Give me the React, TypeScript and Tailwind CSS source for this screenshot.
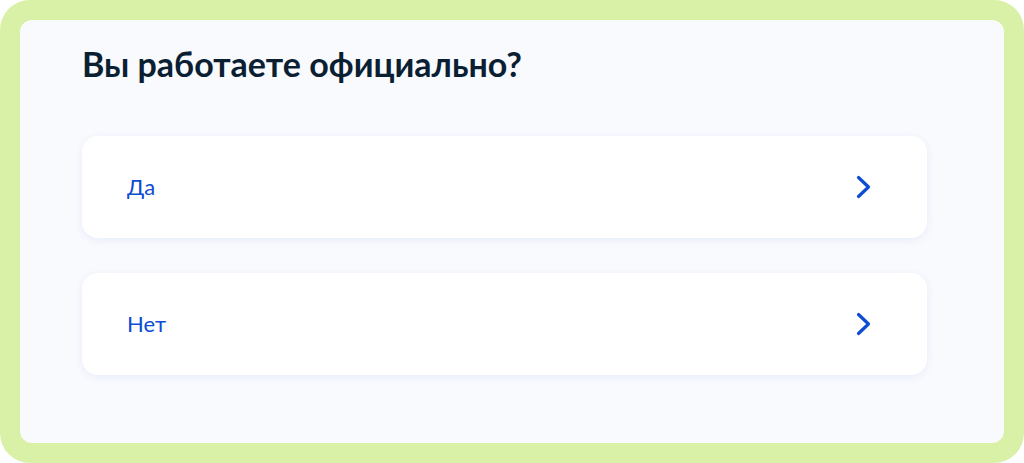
const options = ['Да', 'Нет']

function Chevron() {
  return (
    <svg width="16" height="24" viewBox="0 0 16 24" fill="none">
      <path d="M2.5 2.5 L12.5 12 L2.5 21.5" stroke="#0d4cd3" strokeWidth="3.2" strokeLinecap="round" strokeLinejoin="round" />
    </svg>
  )
}

function OptionCard({ label }: { label: string }) {
  return (
    <button className="flex h-[102px] w-full items-center justify-between rounded-[16px] bg-white pl-[45px] pr-[55px] text-left shadow-[0_2px_8px_rgba(0,50,150,0.07)]">
      <span className="text-[22px] leading-7 text-[#0d4cd3]">{label}</span>
      <Chevron />
    </button>
  )
}

export default function App() {
  return (
    <div className="h-[463px] w-[1024px] bg-white font-['Lato','Noto_Sans',sans-serif]">
      <div className="h-full rounded-[30px] bg-[#d9f0a7] p-5">
        <div className="h-full rounded-[12px] bg-[#f8fafe] pl-[62px] pr-[77px] pt-[24px]">
          <h1 className="text-[34px] font-bold leading-[40px] text-[#0b1f33]">
            Вы работаете официально?
          </h1>
          <div className="mt-[52px] flex flex-col gap-[35px]">
            {options.map((o) => (
              <OptionCard key={o} label={o} />
            ))}
          </div>
        </div>
      </div>
    </div>
  )
}
